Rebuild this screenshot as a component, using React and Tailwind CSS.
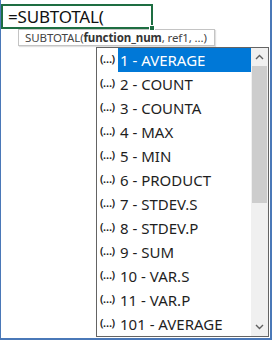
import React from 'react'

const items = [
  '1 - AVERAGE',
  '2 - COUNT',
  '3 - COUNTA',
  '4 - MAX',
  '5 - MIN',
  '6 - PRODUCT',
  '7 - STDEV.S',
  '8 - STDEV.P',
  '9 - SUM',
  '10 - VAR.S',
  '11 - VAR.P',
  '101 - AVERAGE',
]

function Chevron({ up }) {
  return (
    <svg width="9" height="6" viewBox="0 0 9 6" className="block">
      <path
        d={up ? 'M1 5 L4.5 1.5 L8 5' : 'M1 1 L4.5 4.5 L8 1'}
        fill="none"
        stroke="#606060"
        strokeWidth="1.4"
      />
    </svg>
  )
}

export default function App() {
  return (
    <div
      className="w-[272px] h-[340px] bg-white border-l border-r-2 border-b-2 border-[#4a78b8] overflow-hidden"
      style={{ fontFamily: '"Noto Sans", "Open Sans", sans-serif' }}
    >
      {/* active cell */}
      <div className="relative mt-[4px] w-[152px] h-[25px] border-2 border-[#1e6e42] flex items-center pl-[5px]">
        <span className="text-[17px] leading-none text-[#111] tracking-[-0.2px]">=SUBTOTAL(</span>
        <span className="absolute -right-[4px] -bottom-[4px] w-[6px] h-[6px] bg-[#1e6e42] border border-white" />
      </div>

      {/* argument tooltip */}
      <div className="ml-[17px] w-[197px] h-[17px] border border-[#c4c4c4] bg-white flex items-center pl-[6px] shadow-[1px_1px_1px_rgba(0,0,0,0.12)]">
        <span className="text-[11.5px] leading-none text-[#444] whitespace-nowrap tracking-[-0.1px]">
          SUBTOTAL(<b className="font-bold text-[#333]">function_num</b>, ref1, ...)
        </span>
      </div>

      {/* autocomplete list */}
      <div className="ml-[95px] mt-[1px] w-[173px] h-[290px] border border-[#646464] bg-white flex">
        <div className="flex-1 overflow-hidden">
          {items.map((t, i) => (
            <div key={t} className="h-[24px] flex items-center">
              <span className="w-[21px] pl-[3px] text-[11px] font-semibold leading-none text-[#222] -mt-[3px] whitespace-nowrap tracking-[-0.6px]">
                (…)
              </span>
              <span
                className={
                  i === 0
                    ? 'flex-1 h-full flex items-center bg-[#0078d7] text-white text-[15px] pl-[2px]'
                    : 'flex-1 h-full flex items-center text-[#1e1e1e] text-[15px] pl-[2px]'
                }
              >
                {t}
              </span>
            </div>
          ))}
        </div>
        {/* scrollbar */}
        <div className="w-[17px] bg-[#f0f0f0] flex flex-col">
          <div className="h-[18px] flex items-center justify-center">
            <Chevron up />
          </div>
          <div className="h-[137px] mx-[1px] bg-[#cdcdcd]" />
          <div className="flex-1" />
          <div className="h-[18px] flex items-center justify-center">
            <Chevron />
          </div>
        </div>
      </div>
    </div>
  )
}
